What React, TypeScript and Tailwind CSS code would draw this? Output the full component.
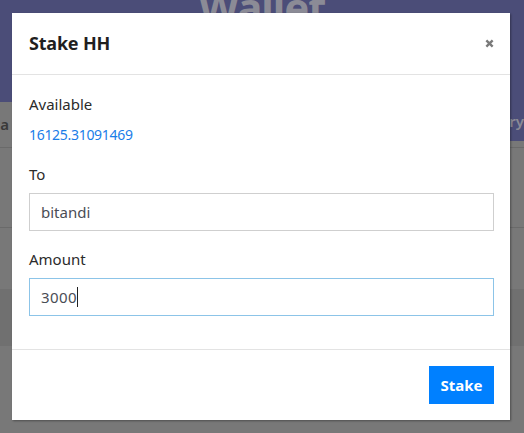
export default function App() {
  return (
    <div
      className="relative h-[433px] w-[524px] overflow-hidden bg-[#787878]"
      style={{ fontFamily: '"Noto Sans", "Open Sans", sans-serif' }}
    >
      {/* dimmed page behind the dialog */}
      <div className="flex h-[102px] items-start justify-center bg-[#4b4d78]">
        <span className="mt-[-14px] text-[42px] font-bold leading-none tracking-tight text-[#8b8b96]">
          Wallet
        </span>
      </div>
      <div className="flex h-[46px] border-b border-[#6a6a6a]">
        <div className="flex flex-1 items-center text-[15px] font-semibold text-[#3a3a3a]">
          <span className="ml-[-4px]">la</span>
        </div>
        <div className="flex h-[39px] w-[60px] items-center justify-end bg-[#4b4d78] text-[15px] font-semibold text-[#8b8b96]">
          ry
        </div>
      </div>
      <div className="h-[80px] border-b border-[#6a6a6a]" />
      <div className="mt-[61px] h-[57px] bg-[#707070]" />

      {/* dialog */}
      <div className="absolute left-[12px] top-[13px] flex w-[498px] flex-col bg-white shadow-[1px_1px_2px_rgba(0,0,0,0.35)]">
        <div className="flex h-[62px] items-center justify-between border-b border-[#e3e3e3] px-[17px]">
          <h2 className="text-[18px] font-bold tracking-[-0.2px] text-[#1f1f1f]">Stake HH</h2>
          <svg width="9" height="9" viewBox="0 0 10 10" className="mr-[-1px]">
            <path d="M1.5 1.5 L8.5 8.5 M8.5 1.5 L1.5 8.5" stroke="#7a7a7a" strokeWidth="2.6" />
          </svg>
        </div>

        <div className="flex flex-col pb-[33px] pl-[17px] pr-[16px] pt-[18px] text-[15px] text-[#2b2b2b]">
          <div className="leading-[22px]">Available</div>
          <div className="mt-[9px] text-[14px] leading-[22px] tracking-[-0.3px] text-[#1a7de8]">
            16125.31091469
          </div>
          <div className="mt-[17px] leading-[22px]">To</div>
          <div className="mt-[8px] flex h-[38px] items-center border border-[#cfcfcf] px-[11px] text-[#4a4d55]">
            bitandi
          </div>
          <div className="mt-[17px] leading-[22px]">Amount</div>
          <div className="mt-[8px] flex h-[38px] items-center border border-[#8cc4e8] px-[11px] text-[#4a4d55]">
            <span className="tracking-[0.4px]">3000</span>
            <span className="h-[20px] w-px bg-[#222]" />
          </div>
        </div>

        <div className="flex justify-end border-t border-[#e3e3e3] px-[16px] pb-[16px] pt-[16px]">
          <button
            type="button"
            className="flex h-[38px] w-[65px] items-center justify-center bg-[#0080ff] text-[15px] font-bold text-white"
          >
            Stake
          </button>
        </div>
      </div>
    </div>
  );
}
